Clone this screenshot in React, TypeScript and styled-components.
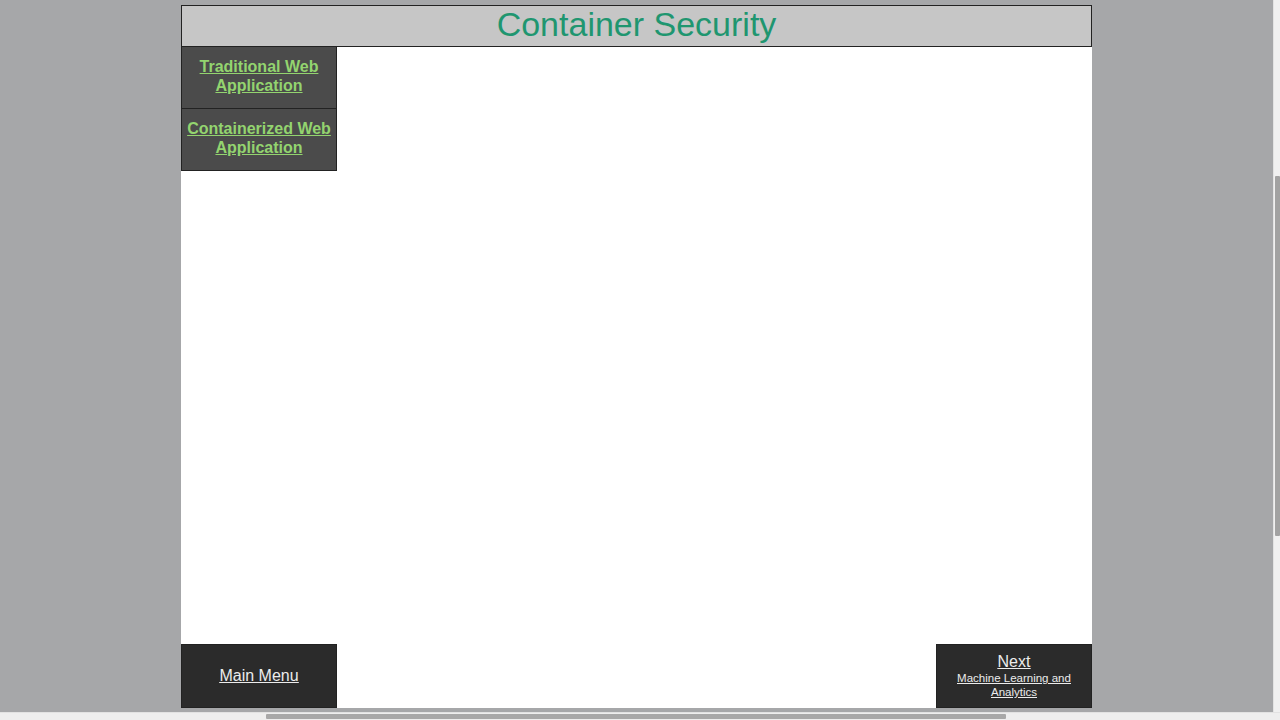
import * as React from 'react';
import styled, { createGlobalStyle } from 'styled-components';

const pageGrey = '#a6a7a9';
const edgeColor = '#222222';

const GlobalStyle = createGlobalStyle`
  html, body {
    margin: 0;
    padding: 0;
    height: 100%;
    overflow: hidden;
  }
  body {
    background: ${pageGrey};
    font-family: "Liberation Sans", Arial, sans-serif;
  }
`;

const Viewport = styled.div`
  display: flex;
  justify-content: center;
  padding-right: 7px;
  padding-top: 5px;
`;

const Frame = styled.div`
  width: 911px;
  height: 703px;
  background: #ffffff;
  display: flex;
  flex-direction: column;
`;

const Header = styled.header`
  height: 40px;
  background: #c6c6c6;
  border: 1px solid ${edgeColor};
  display: flex;
  align-items: center;
  justify-content: center;
`;

const Title = styled.h1`
  margin: 0 0 4px;
  font-size: 34px;
  font-weight: normal;
  color: #1f9670;
  line-height: 36px;
`;

const Body = styled.div`
  flex: 1;
  display: flex;
  align-items: flex-start;
`;

const SideNav = styled.nav`
  width: 154px;
  border-left: 1px solid ${edgeColor};
  border-right: 1px solid ${edgeColor};
  display: flex;
  flex-direction: column;
`;

const NavItem = styled.a`
  box-sizing: border-box;
  height: 62px;
  border-bottom: 1px solid ${edgeColor};
  background: #4b4b4b;
  color: #93d46f;
  font-weight: bold;
  font-size: 16px;
  line-height: 19px;
  text-decoration: underline;
  display: flex;
  align-items: center;
  justify-content: center;
  text-align: center;
  padding: 0 4px 4px;
  cursor: pointer;
`;

const Footer = styled.footer`
  height: 64px;
  display: flex;
  justify-content: space-between;
`;

const FooterButton = styled.a`
  width: 154px;
  background: #2b2b2b;
  border: 1px solid ${edgeColor};
  color: #ececec;
  display: flex;
  flex-direction: column;
  align-items: center;
  justify-content: center;
  text-align: center;
  text-decoration: underline;
  cursor: pointer;
`;

const ButtonLabel = styled.span`
  font-size: 16px;
  line-height: 18px;
  text-decoration: underline;
`;

const ButtonSub = styled.span`
  font-size: 11.5px;
  line-height: 14px;
  text-decoration: underline;
  padding: 0 8px;
`;

const VScroll = styled.div`
  position: fixed;
  top: 0;
  right: 0;
  width: 7px;
  height: 712px;
  background: #f0f0f0;
  border-left: 1px solid #e2e2e2;
  box-sizing: border-box;
`;

const VThumb = styled.div`
  position: absolute;
  top: 176px;
  left: 1px;
  width: 5px;
  height: 360px;
  background: #a2a2a2;
  border-radius: 1px;
`;

const HScroll = styled.div`
  position: fixed;
  left: 0;
  bottom: 0;
  width: 100%;
  height: 8px;
  background: #eeeeee;
  border-top: 1px solid #e2e2e2;
  box-sizing: border-box;
`;

const HThumb = styled.div`
  position: absolute;
  top: 1px;
  left: 266px;
  width: 740px;
  height: 5px;
  background: #a8a8a8;
  border-radius: 1px;
`;

const navLinks = ['Traditional Web Application', 'Containerized Web Application'];

const App = () => (
  <>
    <GlobalStyle />
    <Viewport>
      <Frame>
        <Header>
          <Title>Container Security</Title>
        </Header>
        <Body>
          <SideNav>
            {navLinks.map(link => (
              <NavItem key={link}>{link}</NavItem>
            ))}
          </SideNav>
        </Body>
        <Footer>
          <FooterButton>
            <ButtonLabel>Main Menu</ButtonLabel>
          </FooterButton>
          <FooterButton>
            <ButtonLabel>Next</ButtonLabel>
            <ButtonSub>Machine Learning and Analytics</ButtonSub>
          </FooterButton>
        </Footer>
      </Frame>
    </Viewport>
    <VScroll>
      <VThumb />
    </VScroll>
    <HScroll>
      <HThumb />
    </HScroll>
  </>
);

export default App;
